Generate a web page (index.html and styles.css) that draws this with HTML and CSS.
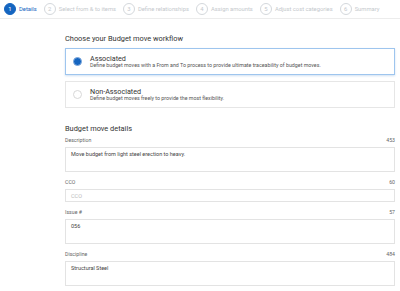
FILE: index.html
```html
<!DOCTYPE html>
<html lang="en">
<head>
    <meta charset="UTF-8">
    <title>Budget move</title>
    <link rel="stylesheet" href="styles.css">
</head>
<body>
    <div class="stepper">
        <div class="step active"><span class="step-num">1</span>Details</div>
        <div class="step"><span class="step-num">2</span>Select from &amp; to items</div>
        <div class="step"><span class="step-num">3</span>Define relationships</div>
        <div class="step"><span class="step-num">4</span>Assign amounts</div>
        <div class="step"><span class="step-num">5</span>Adjust cost categories</div>
        <div class="step"><span class="step-num">6</span>Summary</div>
    </div>

    <div class="content">
        <h2 class="section-title">Choose your Budget move workflow</h2>

        <div class="option selected">
            <span class="radio"></span>
            <div class="option-text">
                <div class="option-name">Associated</div>
                <div class="option-desc">Define budget moves with a From and To process to provide ultimate traceability of budget moves.</div>
            </div>
        </div>
        <div class="option">
            <span class="radio"></span>
            <div class="option-text">
                <div class="option-name">Non-Associated</div>
                <div class="option-desc">Define budget moves freely to provide the most flexibility.</div>
            </div>
        </div>

        <h2 class="section-title details-title">Budget move details</h2>

        <div class="field">
            <div class="field-head"><span>Description</span><span>453</span></div>
            <div class="box tall">Move budget from light steel erection to heavy.</div>
        </div>
        <div class="field">
            <div class="field-head"><span>CCO</span><span>60</span></div>
            <div class="box placeholder">CCO</div>
        </div>
        <div class="field">
            <div class="field-head"><span>Issue #</span><span>57</span></div>
            <div class="box tall">056</div>
        </div>
        <div class="field">
            <div class="field-head"><span>Discipline</span><span>484</span></div>
            <div class="box tall">Structural Steel</div>
        </div>
    </div>
</body>
</html>
```

FILE: styles.css
```css
body {
    font-family: Roboto, "Liberation Sans", sans-serif;
    margin: 0;
    padding: 0;
    background-color: #fff;
    color: #444;
}
.stepper {
    display: flex;
    align-items: center;
    height: 18px;
    padding-left: 4px;
    border-bottom: 1px solid #ececec;
    gap: 7px;
}
.step {
    display: flex;
    align-items: center;
    font-size: 5.8px;
    color: #c4c8cc;
    white-space: nowrap;
}
.step-num {
    display: inline-flex;
    justify-content: center;
    align-items: center;
    width: 12px;
    height: 12px;
    border: 1px solid #d4d8dc;
    border-radius: 50%;
    margin-right: 3px;
    font-size: 5.9px;
    box-sizing: border-box;
}
.step.active {
    color: #1565c0;
}
.step.active .step-num {
    background-color: #1565c0;
    border-color: #1565c0;
    color: #fff;
}
.content {
    padding: 0 5px 0 65px;
}
.section-title {
    font-size: 7.4px;
    line-height: 9px;
    font-weight: normal;
    color: #333;
    margin: 14.5px 0 5.5px;
}
.details-title {
    margin: 15.5px 0 4.5px;
}
.option {
    display: flex;
    align-items: center;
    height: 27px;
    border: 1px solid #e6e6e6;
    margin-bottom: 6px;
    box-sizing: border-box;
}
.option.selected {
    border-color: #9ec5ee;
    box-shadow: 0 1px 2px rgba(21, 101, 192, 0.2);
}
.radio {
    width: 7px;
    height: 7px;
    border: 1px solid #d8d8d8;
    border-radius: 50%;
    margin: 0 8px 0 7px;
}
.selected .radio {
    background-color: #1565c0;
    border-color: #7fa9dc;
}
.option-name {
    font-size: 7.2px;
    color: #333;
    line-height: 7px;
}
.option-desc {
    font-size: 5.3px;
    line-height: 6px;
    color: #555;
}
.field {
    margin-bottom: 7px;
}
.field-head {
    display: flex;
    justify-content: space-between;
    font-size: 5.2px;
    line-height: 6px;
    color: #666;
    margin-bottom: 4px;
}
.box {
    border: 1px solid #e3e3e3;
    font-size: 5.5px;
    line-height: 6px;
    color: #444;
    padding: 3px 5px;
    box-sizing: border-box;
    height: 13px;
}
.box.tall {
    height: 25px;
}
.box.placeholder {
    color: #bbb;
}
```
